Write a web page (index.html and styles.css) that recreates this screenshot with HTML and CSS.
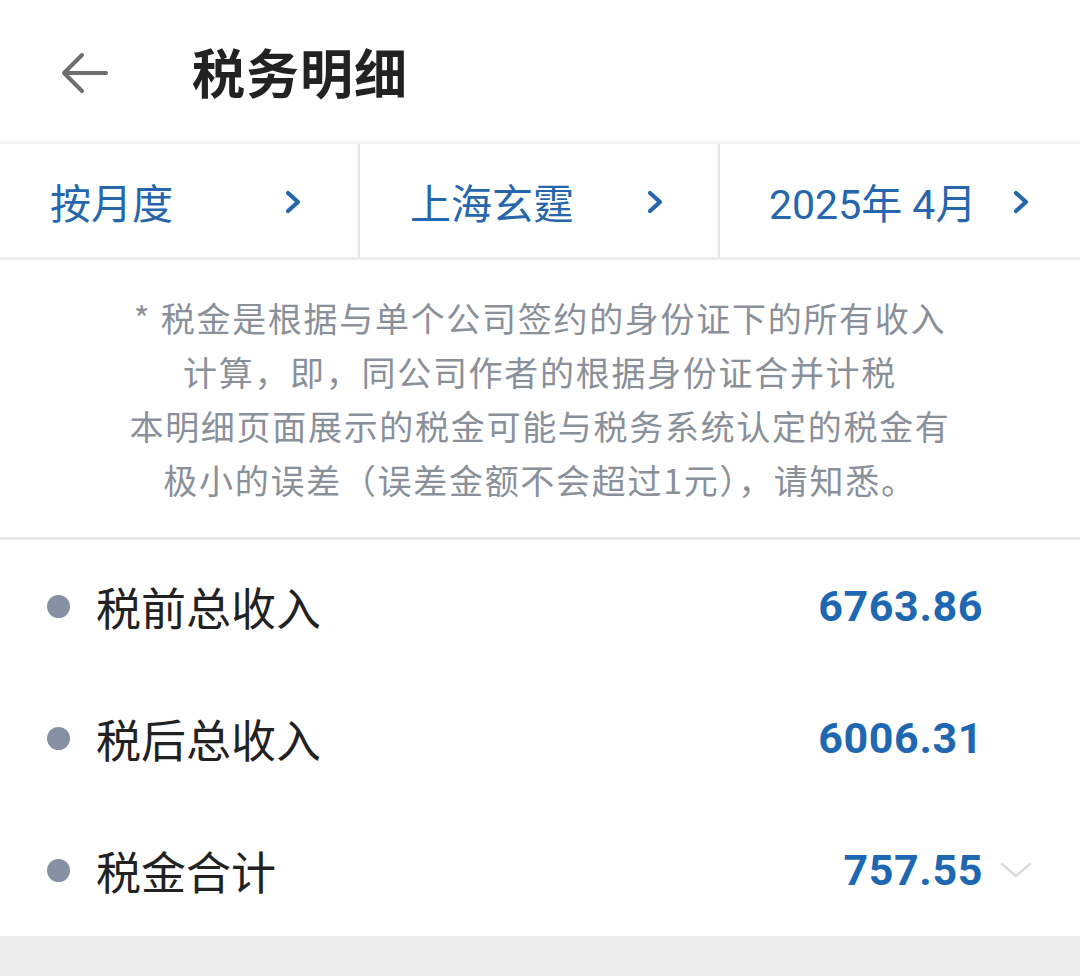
FILE: index.html
```html
<!DOCTYPE html>
<html lang="zh-CN">
<head>
<meta charset="utf-8">
<title>税务明细</title>
<link rel="stylesheet" href="styles.css">
</head>
<body>
<div class="page">
  <header class="topbar">
    <svg class="back" width="52" height="48" viewBox="0 0 52 48"><path d="M48 24H6M24 6L6 24l18 18" fill="none" stroke="#6e6e6e" stroke-width="4" stroke-linecap="round" stroke-linejoin="round"/></svg>
    <h1 class="title">税务明细</h1>
  </header>
  <nav class="filters">
    <div class="filter"><span class="flabel">按月度</span><svg class="chev" width="18" height="26" viewBox="0 0 18 26"><path d="M4 4l10 9-10 9" fill="none" stroke="#2566ad" stroke-width="4.2" stroke-linecap="round" stroke-linejoin="round"/></svg></div>
    <div class="filter"><span class="flabel">上海玄霆</span><svg class="chev" width="18" height="26" viewBox="0 0 18 26"><path d="M4 4l10 9-10 9" fill="none" stroke="#2566ad" stroke-width="4.2" stroke-linecap="round" stroke-linejoin="round"/></svg></div>
    <div class="filter"><span class="flabel">2025年 4月</span><svg class="chev" width="18" height="26" viewBox="0 0 18 26"><path d="M4 4l10 9-10 9" fill="none" stroke="#2566ad" stroke-width="4.2" stroke-linecap="round" stroke-linejoin="round"/></svg></div>
  </nav>
  <section class="note">
    <p>* 税金是根据与单个公司签约的身份证下的所有收入</p>
    <p>计算，即，同公司作者的根据身份证合并计税</p>
    <p>本明细页面展示的税金可能与税务系统认定的税金有</p>
    <p>极小的误差（误差金额不会超过1元），请知悉。</p>
  </section>
  <section class="rows">
    <div class="row"><span class="dot"></span><span class="label">税前总收入</span><span class="value">6763.86</span><span class="tail"></span></div>
    <div class="row"><span class="dot"></span><span class="label">税后总收入</span><span class="value">6006.31</span><span class="tail"></span></div>
    <div class="row"><span class="dot"></span><span class="label">税金合计</span><span class="value">757.55</span><span class="tail"><svg width="34" height="20" viewBox="0 0 34 20"><path d="M3 4l14 12 14-12" fill="none" stroke="#dcdcdc" stroke-width="2.5" stroke-linecap="round" stroke-linejoin="round"/></svg></span></div>
  </section>
  <footer class="bottom"></footer>
</div>
</body>
</html>
```
FILE: styles.css
```css
* { box-sizing: border-box; }
html, body { margin: 0; padding: 0; }
body {
  width: 1080px;
  height: 976px;
  overflow: hidden;
  background: #ffffff;
  font-family: Roboto, "Noto Sans CJK SC", sans-serif;
}
.page { display: flex; flex-direction: column; height: 976px; }

.topbar {
  height: 142px;
  display: flex;
  align-items: center;
  padding-left: 58px;
  background: #fff;
}
.back { margin-top: 4px; }
.title {
  margin: 0 0 0 82px;
  font-family: "Noto Sans CJK SC", sans-serif;
  font-size: 53px;
  font-weight: 700;
  color: #222;
  letter-spacing: 1px;
}

.filters {
  height: 118px;
  display: grid;
  grid-template-columns: repeat(3, 1fr);
  border-top: 2px solid #f1f1f1;
  border-bottom: 3px solid #ebebeb;
  box-shadow: 0 -2px 3px rgba(0,0,0,0.03);
}
.filter {
  display: flex;
  align-items: center;
  justify-content: space-between;
  padding: 0 56px 0 50px;
  border-right: 2px solid #e6e6e6;
}
.filter:nth-child(2) { padding-left: 50px; padding-right: 54px; }
.filter:nth-child(3) { border-right: none; padding-left: 49px; padding-right: 50px; }
.flabel {
  font-family: Roboto, "Noto Sans CJK SC", sans-serif;
  font-size: 41px;
  color: #2566ad;
}
.chev { margin-top: 2px; }

.note {
  height: 280px;
  padding-top: 31px;
  text-align: center;
  border-bottom: 3px solid #e9e9e9;
}
.note p {
  margin: 0;
  font-family: "Noto Sans CJK SC", sans-serif;
  font-size: 34px;
  line-height: 54px;
  letter-spacing: 1.7px;
  color: #8a9099;
}

.rows { display: flex; flex-direction: column; }
.row {
  height: 132px;
  display: flex;
  align-items: center;
  padding-left: 47px;
}
.dot {
  width: 23px;
  height: 23px;
  border-radius: 50%;
  background: #8690a3;
}
.label {
  margin-left: 26px;
  font-family: "Noto Sans CJK SC", sans-serif;
  font-size: 45px;
  color: #222;
  flex: 1;
}
.value {
  font-family: Roboto, sans-serif;
  font-weight: 700;
  font-size: 43px;
  color: #1d68b1;
  letter-spacing: 0.6px;
}
.tail {
  width: 97px;
  display: flex;
  align-items: center;
  padding-left: 16px;
}

.bottom {
  flex: 1;
  background: #ececec;
}
```
